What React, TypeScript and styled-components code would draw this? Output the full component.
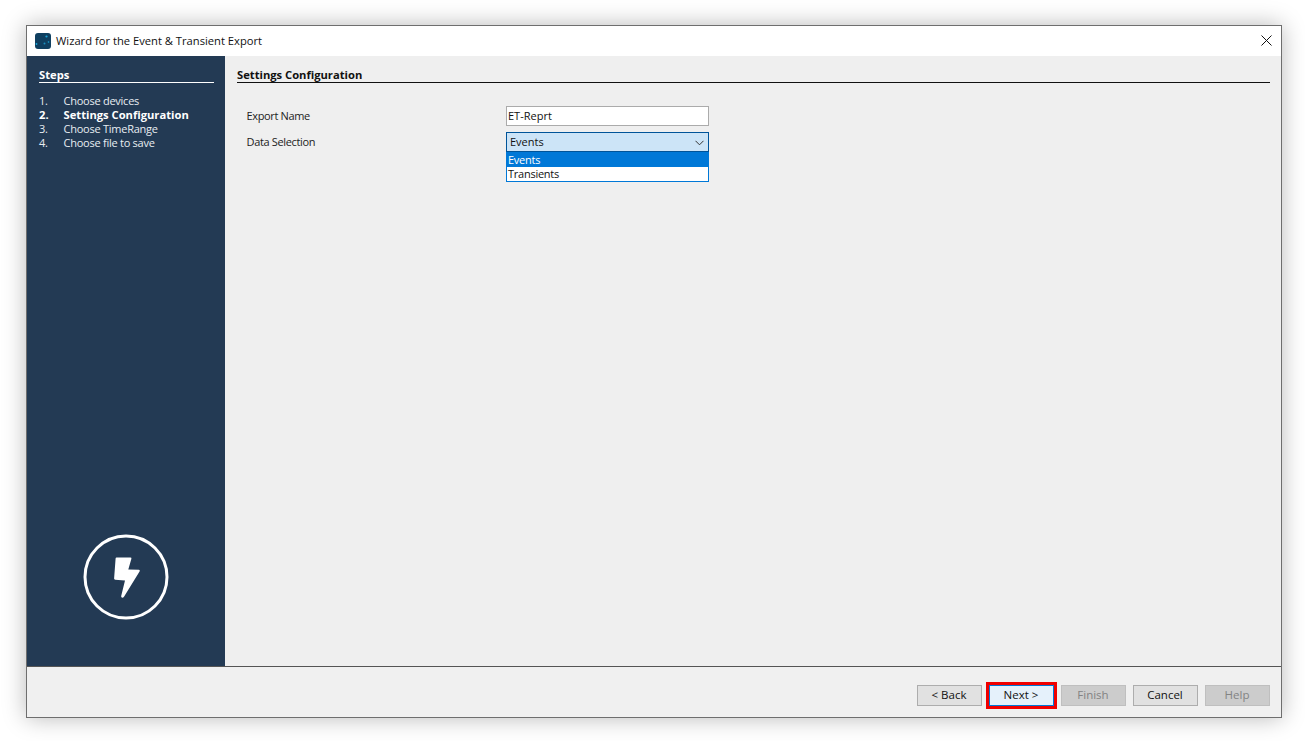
import React from 'react'
import styled, {createGlobalStyle} from 'styled-components'

const uiFont = '"Open Sans", "Noto Sans", "Liberation Sans", sans-serif'

const Global = createGlobalStyle`
  html, body {
    margin: 0;
    padding: 0;
    background: #fff;
  }
  body {
    font-family: ${uiFont};
    font-size: 11px;
    letter-spacing: -0.25px;
    color: #111;
  }
`

const Page = styled.div`
  width: 1305px;
  height: 741px;
  padding: 25px 0 0 26px;
  box-sizing: border-box;
  overflow: hidden;
`

const Window = styled.div`
  width: 1256px;
  height: 693px;
  box-sizing: border-box;
  border: 1px solid #6e6e6e;
  display: flex;
  flex-direction: column;
  background: #f0f0f0;
  box-shadow: 0 0 22px rgba(0, 0, 0, 0.28);
`

const TitleBar = styled.div`
  height: 30px;
  flex: none;
  background: #fff;
  display: flex;
  align-items: center;
  padding: 0 8px;
  gap: 5px;
  font-size: 11.2px;
  letter-spacing: 0;
`

const Title = styled.span`
  flex: 1;
  color: #111;
  padding-bottom: 2px;
`

const Body = styled.div`
  flex: 1;
  display: flex;
  min-height: 0;
`

const Sidebar = styled.aside`
  width: 198px;
  flex: none;
  background: #233a54;
  color: #e8edf2;
  box-sizing: border-box;
  padding: 12px 11px 44px 12px;
  display: flex;
  flex-direction: column;
`

const SideHeading = styled.div`
  font-weight: 700;
  font-size: 11.2px;
  letter-spacing: 0;
  color: #fff;
  line-height: 14px;
  height: 13px;
  padding-bottom: 1px;
  border-bottom: 1px solid #fff;
`

const StepList = styled.ol`
  list-style: none;
  margin: 11px 0 0;
  padding: 0;
`

const Step = styled.li<{$active?: boolean}>`
  display: flex;
  height: 14px;
  line-height: 14px;
  font-weight: ${p => (p.$active ? 700 : 400)};
  font-size: ${p => (p.$active ? '11.2px' : '11px')};
  letter-spacing: ${p => (p.$active ? '0' : '-0.25px')};
  color: ${p => (p.$active ? '#fff' : '#e8edf2')};
`

const StepNo = styled.span`
  width: 24.5px;
  flex: none;
`

const Badge = styled.div`
  margin: auto 0 0 -2px;
  align-self: center;
  height: 90px;
  width: 90px;
`

const Main = styled.main`
  flex: 1;
  background: #efefef;
  padding: 12px 11px 0 12px;
  min-width: 0;
`

const MainHeading = styled.div`
  font-weight: 700;
  font-size: 11.2px;
  letter-spacing: 0;
  color: #111;
  line-height: 14px;
  height: 13px;
  padding-bottom: 1px;
  border-bottom: 1px solid #111;
`

const Form = styled.div`
  margin-top: 23px;
  padding-left: 9.5px;
  display: grid;
  grid-template-columns: 259.5px 203px;
  row-gap: 6px;
  align-items: center;
`

const Label = styled.label`
  color: #222;
  padding-bottom: 2px;
  letter-spacing: -0.35px;
`

const TextBox = styled.div`
  height: 20px;
  box-sizing: border-box;
  background: #fff;
  border: 1px solid #ababab;
  padding-left: 1px;
  line-height: 18px;
  color: #111;
  letter-spacing: 0;
`

const Combo = styled.div`
  position: relative;
  height: 20px;
`

const ComboField = styled.div`
  height: 20px;
  box-sizing: border-box;
  background: #cce4f7;
  border: 1px solid #005499;
  padding: 0 4px 0 3px;
  line-height: 18px;
  letter-spacing: 0;
  display: flex;
  align-items: center;
  justify-content: space-between;
`

const ComboList = styled.ul`
  position: absolute;
  left: 0;
  right: 0;
  top: 20px;
  margin: 0;
  padding: 0;
  list-style: none;
  box-sizing: border-box;
  height: 30px;
  background: #fff;
  border: 1px solid #0078d7;
  border-top: none;
`

const ComboItem = styled.li<{$selected?: boolean}>`
  height: 15px;
  line-height: 15px;
  padding-left: 1px;
  &:last-child {
    height: 14px;
    line-height: 13px;
  }
  background: ${p => (p.$selected ? '#0078d7' : 'transparent')};
  color: ${p => (p.$selected ? '#fff' : '#111')};
`

const Footer = styled.footer`
  height: 51px;
  flex: none;
  box-sizing: border-box;
  border-top: 1px solid #555;
  background: #f0f0f0;
  display: flex;
  justify-content: flex-end;
  align-items: flex-start;
  gap: 7px;
  padding: 18px 11px 0 0;
`

const Button = styled.button<{$primary?: boolean}>`
  width: 65px;
  height: 21px;
  box-sizing: border-box;
  padding: 0 1px 3px 0;
  font-family: ${uiFont};
  font-size: 11.5px;
  color: #111;
  background: ${p => (p.$primary ? '#e5f1fb' : '#e1e1e1')};
  border: 1px solid ${p => (p.$primary ? '#0078d7' : '#adadad')};
  outline: ${p => (p.$primary ? '3px solid #f00000' : 'none')};
  &:disabled {
    background: #cccccc;
    border-color: #bfbfbf;
    color: #838383;
  }
`

const AppLogo = () => (
  <svg width="16" height="16" viewBox="0 0 16 16">
    <rect width="16" height="16" rx="3" fill="#0f3f60" />
    <circle cx="11.5" cy="3.5" r="1.1" fill="#18a8dc" />
    <circle cx="1.5" cy="11" r="0.9" fill="#18a8dc" />
    <circle cx="9.5" cy="10.5" r="1" fill="#1c8fc0" />
    <circle cx="13.5" cy="9" r="0.8" fill="#18a8dc" />
  </svg>
)

const CloseIcon = () => (
  <svg width="11" height="11" viewBox="0 0 11 11" style={{marginRight: 1, marginBottom: 1}}>
    <path d="M0.5 0.5 L10.5 10.5 M10.5 0.5 L0.5 10.5" stroke="#111" strokeWidth="1" fill="none" />
  </svg>
)

const Chevron = () => (
  <svg width="9" height="6" viewBox="0 0 9 6" style={{marginTop: 2}}>
    <path d="M0.5 0.8 L4.5 4.8 L8.5 0.8" stroke="#333" strokeWidth="1" fill="none" />
  </svg>
)

const BoltBadge = () => (
  <svg width="90" height="90" viewBox="0 0 90 90">
    <circle cx="45" cy="45" r="41" fill="none" stroke="#fff" strokeWidth="3" />
    <path
      d="M35.5 25.5 H49.5 Q50.7 25.5 50.4 26.7 L47.3 37.5 L58 37.8 Q59.2 38 58.7 39.2 L43 64.8 Q42 66 40.8 65.6 Q40 65.2 40.2 64 L44 48.5 L34.2 47.8 Q33 47.6 33.1 46.5 L34.6 26.4 Q34.7 25.5 35.5 25.5 Z"
      fill="#fff"
    />
  </svg>
)

const steps = ['Choose devices', 'Settings Configuration', 'Choose TimeRange', 'Choose file to save']

export default function App() {
  return (
    <Page>
      <Global />
      <Window>
        <TitleBar>
          <AppLogo />
          <Title>Wizard for the Event &amp; Transient Export</Title>
          <CloseIcon />
        </TitleBar>
        <Body>
          <Sidebar>
            <SideHeading>Steps</SideHeading>
            <StepList>
              {steps.map((s, i) => (
                <Step key={s} $active={i === 1}>
                  <StepNo>{i + 1}.</StepNo>
                  {s}
                </Step>
              ))}
            </StepList>
            <Badge>
              <BoltBadge />
            </Badge>
          </Sidebar>
          <Main>
            <MainHeading>Settings Configuration</MainHeading>
            <Form>
              <Label>Export Name</Label>
              <TextBox>ET-Reprt</TextBox>
              <Label>Data Selection</Label>
              <Combo>
                <ComboField>
                  Events
                  <Chevron />
                </ComboField>
                <ComboList>
                  <ComboItem $selected>Events</ComboItem>
                  <ComboItem>Transients</ComboItem>
                </ComboList>
              </Combo>
            </Form>
          </Main>
        </Body>
        <Footer>
          <Button>&lt; Back</Button>
          <Button $primary>Next &gt;</Button>
          <Button disabled>Finish</Button>
          <Button>Cancel</Button>
          <Button disabled>Help</Button>
        </Footer>
      </Window>
    </Page>
  )
}
